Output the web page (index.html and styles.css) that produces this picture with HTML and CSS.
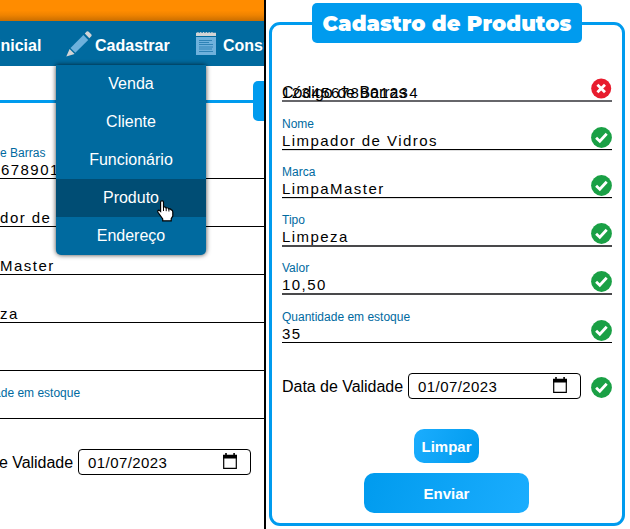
FILE: index.html
```html
<!DOCTYPE html>
<html lang="pt-BR">
<head>
<meta charset="utf-8">
<title>Cadastro de Produtos</title>
<link rel="stylesheet" href="styles.css">
</head>
<body>
<svg class="defs" aria-hidden="true">
  <symbol id="ok" viewBox="0 0 21 21"><circle cx="10.5" cy="10.5" r="10.4" fill="#1aa045"/><path d="M5.1 10.7 8.8 14.2 15.7 6.8" fill="none" stroke="#fff" stroke-width="2.8"/></symbol>
  <symbol id="error" viewBox="0 0 21 21"><circle cx="10.2" cy="10.5" r="10" fill="#e81c2e"/><path d="M7.4 7.7l5.6 5.6M13 7.7l-5.6 5.6" stroke="#fff" stroke-width="2.8" stroke-linecap="square"/></symbol>
  <symbol id="calendar" viewBox="0 0 14 16"><path d="M.7 2.5h12.6v12.8H.7z" fill="none" stroke="#000" stroke-width="1.2"/><path d="M0 1.8h14v3.7H0zM2.2 0h1.6v2H2.2zM10.3 0h1.6v2h-1.6z"/></symbol>
</svg>
<div class="screens">
  <section class="site">
    <div class="banner"></div>
    <nav class="nav">
      <a class="nav-home">Inicial</a>
      <a class="nav-link">
        <svg class="pencil" viewBox="0 0 26 26"><path d="M4.5 17 17.4 4.1l4.8 4.8L9.3 21.8z" fill="#6eb1dc"/><path d="M3.6 17.9l5 5L.3 25.4zM18.8 2.6 20.7.6q1-.8 2 .1l2.5 2.5q.9 1 .1 2l-2 2z" fill="#d3d4d5"/></svg>
        Cadastrar
        <span class="menu">
          <span>Venda</span><span>Cliente</span><span>Funcionário</span><span class="active">Produto</span><span>Endereço</span>
          <svg class="cursor" viewBox="0 0 17 22"><path d="M4.2 1Q6.4.4 6.5 2.6V7q2-.7 2.6.9 2-.6 2.7 1.1 2-.3 2.5.9 1.5.2 1.5 2v4.2l-1.6 2.6v2.1H5.7v-1.9L1 12.3q-.9-2.2 1-2.2l1.6 1.3V2.3Q3.6 1.4 4.2 1z" fill="#fff" stroke="#000" stroke-width="1.2"/><path d="M6.5 7v4M9.2 8v3.2M11.9 9v2.5" stroke="#000" stroke-width="1"/></svg>
        </span>
      </a>
      <a class="nav-link">
        <svg class="note" viewBox="0 0 20 23"><path d="M0 5h20v18H0z" fill="#6eb1dc"/><path d="M0 .7h1.4V0h1.1v.7h1.7V0h1.1v.7H7V0h1.1v.7h1.7V0h1.1v.7h1.7V0h1.1v.7h1.7V0h1.1v.7H20V4H0z" fill="#d3d4d5"/><path d="M3 8.5h13M3 10.5h10M3 12.5h14M3 15h14M3 17h13M3 19.5h14" stroke="#2e83b6"/></svg>
        Consultar
      </a>
    </nav>
    <form class="form form-site">
      <div class="frame-line"></div><div class="tab"></div>
      <div class="fields">
        <div class="field"><label>Código de Barras</label><span class="value">12345678901234</span></div>
        <div class="field"><label></label><span class="value">Limpador de Vidros</span></div>
        <div class="field"><label></label><span class="value">LimpaMaster</span></div>
        <div class="field"><label></label><span class="value">Limpeza</span></div>
        <div class="field"><label></label><span class="value"></span></div>
        <div class="field"><label>Quantidade em estoque</label><span class="value"></span></div>
      </div>
      <div class="date-row"><span>Data de Validade</span><div class="date"><span>01/07/2023</span><svg><use href="#calendar"/></svg></div></div>
    </form>
  </section>
  <section class="product">
    <form class="form card">
      <h1>Cadastro de Produtos</h1>
      <div class="fields">
        <div class="field invalid"><label>Código de Barras</label><span class="value">12345678901234</span><svg class="status"><use href="#error"/></svg></div>
        <div class="field soft"><label>Nome</label><span class="value">Limpador de Vidros</span><svg class="status"><use href="#ok"/></svg></div>
        <div class="field soft"><label>Marca</label><span class="value">LimpaMaster</span><svg class="status"><use href="#ok"/></svg></div>
        <div class="field dark"><label>Tipo</label><span class="value">Limpeza</span><svg class="status"><use href="#ok"/></svg></div>
        <div class="field dark"><label>Valor</label><span class="value">10,50</span><svg class="status"><use href="#ok"/></svg></div>
        <div class="field"><label>Quantidade em estoque</label><span class="value">35</span><svg class="status"><use href="#ok"/></svg></div>
      </div>
      <div class="date-row"><span>Data de Validade</span><div class="date"><span>01/07/2023</span><svg><use href="#calendar"/></svg></div><svg class="date-status"><use href="#ok"/></svg></div>
      <div class="actions"><button type="button" class="clear">Limpar</button><button type="button" class="send">Enviar</button></div>
    </form>
  </section>
</div>
</body>
</html>
```
FILE: styles.css
```css
* { box-sizing: border-box; }
body { margin: 0; background: #fff; color: #000; font: 16px "Liberation Sans", Arial, sans-serif; overflow: hidden; }
.defs { display: none; }
svg { display: block; flex: none; }
.screens { display: grid; grid-template-columns: 264px 366px; height: 529px; }
.site { overflow: hidden; }
.product { border-left: 2px solid #000; padding: 22px 5px 0 3px; }

/* Site header */
.banner { height: 21px; background: linear-gradient(#ff8c00 0 50%, #ef8300 72%, #c96e00); }
.nav { display: flex; height: 45px; background: #006a9f; color: #fff; font-weight: bold; white-space: nowrap; }
.nav a { display: flex; align-items: center; height: 50px; }
.nav-home { flex: none; width: 71px; margin-left: -4px; }
.nav-link { position: relative; flex: none; width: 130px; left: -1px; }
.pencil { width: 26px; height: 26px; margin: -4px 3px 0 0; }
.note { width: 20px; height: 23px; margin: -5px 7px 0 0; }
.menu { position: absolute; z-index: 2; top: 44px; left: -10px; width: 150px; background: #006a9f; border-radius: 0 0 5px 5px; box-shadow: 0 0 5px rgba(0,0,0,.75); font-weight: normal; text-align: center; }
.menu > span { display: block; height: 38px; line-height: 37px; }
.menu .active { background: #004d74; }
.cursor { position: absolute; left: 101px; top: 135px; width: 17px; height: 22px; }

/* Form fields */
.fields { display: grid; }
.field { position: relative; display: flex; flex-direction: column; justify-content: flex-end; border-bottom: 1px solid #000; }
.field label { color: #006a9f; font-size: 12px; line-height: 14px; min-height: 14px; margin-bottom: 1px; }
.value { min-height: 18px; margin-bottom: -1px; font-size: 15px; line-height: 18px; letter-spacing: 1.45px; white-space: nowrap; }
.status { position: absolute; right: 0; bottom: 1px; width: 21px; height: 21px; }
.soft { box-shadow: 0 1px #dedede; }
.dark { border-bottom: 1px solid #49494b; box-shadow: 0 1px #49494b; }
.invalid { border-bottom-color: #66666a; box-shadow: 0 1px #66666a; }
.invalid .value { margin-bottom: -2px; }
.invalid label { position: absolute; left: 0; bottom: -1px; margin: 0; color: #000; font-size: 16px; line-height: 16px; }
.date-row { display: flex; align-items: center; white-space: nowrap; }
.date-row > span { padding-top: 1px; letter-spacing: -.03px; }
.date { display: flex; align-items: center; justify-content: space-between; flex: none; width: 173px; height: 26px; margin-left: 5px; padding: 0 13px 0 9px; border: 1px solid #000; border-radius: 4px; font-size: 15px; letter-spacing: .4px; }
.date span { padding-top: 1px; }
.date svg { width: 14px; height: 16px; margin-top: -2px; }
.date-status { width: 21px; height: 21px; margin: 1px 0 -1px 10px; }

.form-site { position: relative; }
.frame-line { position: absolute; top: 34px; width: 264px; height: 3px; background: #009bee; }
.tab { position: absolute; top: 15px; left: 253px; width: 20px; height: 40px; border-radius: 5px; background: #009bee; }
.form-site .fields { grid-template-rows: repeat(6, 48px); padding-top: 65px; margin-left: -48px; }
.form-site .date-row { margin: 30px 0 0 -48px; }

/* Product card */
.card { height: 504px; border: 3px solid #009bee; border-radius: 11px; padding: 0 10px; }
h1 { width: 270px; height: 40px; margin: -22px auto 0; background: #009bee; border-radius: 5px; color: #fff; font: 900 21px/41px Montserrat, Inter, sans-serif; letter-spacing: .05px; text-align: center; white-space: nowrap; }
.card .fields { grid-template-rows: 58px 49px 48px 48px 48px 49px; }
.card .date-row { margin-top: 30px; }
.actions { display: flex; flex-direction: column; align-items: center; gap: 10px; margin-left: -1px; padding: 30px 1px 0 0; }
.actions button { border: 0; border-radius: 10px; padding: 0 0 0 1px; color: #fff; font: bold 15px "Liberation Sans", Arial, sans-serif; }
.clear { width: 65px; height: 34px; background: linear-gradient(110deg, #1badfe, #009bee); }
.send { width: 165px; height: 40px; background: linear-gradient(110deg, #009bee, #1badfe); }
```
